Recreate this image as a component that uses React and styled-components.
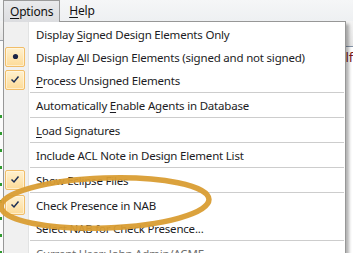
import React from 'react';
import styled, { createGlobalStyle } from 'styled-components';

const GlobalStyle = createGlobalStyle`
  html, body { margin: 0; padding: 0; background: #ffffff; }
  body { width: 353px; height: 253px; overflow: hidden; }
`;

const FONT = `"Noto Sans", "Segoe UI", "Liberation Sans", sans-serif`;

const Screen = styled.div`
  position: relative;
  width: 353px;
  height: 253px;
  overflow: hidden;
  background: #ffffff;
  font-family: ${FONT};
  font-size: 11.5px;
  letter-spacing: -0.2px;
  color: #1c1c24;
`;

const MenuBar = styled.div`
  position: relative;
  z-index: 3;
  display: flex;
  gap: 2px;
  height: 21px;
  padding-left: 3px;
  background: linear-gradient(#f5f6f7, #eef0f2);
`;

const MenuTitle = styled.div`
  display: flex;
  align-items: center;
  box-sizing: border-box;
  height: ${(p) => (p.$open ? '22px' : '21px')};
  padding: 0 6px 1px;
  border: 1px solid ${(p) => (p.$open ? '#9a9a9a' : 'transparent')};
  border-bottom: none;
  background: ${(p) => (p.$open ? 'linear-gradient(#e9eaec, #dcdde0)' : 'transparent')};
  color: #111;
  font-size: 12px;
`;

const Key = styled.span`
  text-decoration: underline;
  text-underline-offset: 2px;
  text-decoration-thickness: 1px;
`;

const Workspace = styled.div`
  display: flex;
  height: 232px;
`;

const TreePane = styled.div`
  width: 140px;
  display: flex;
  flex-direction: column;
  border-right: 1px solid #a0a0a0;
`;

const PaneHeader = styled.div`
  height: ${(p) => p.$h}px;
  flex: none;
  background: linear-gradient(#f3f3f3, #e6e6e6);
  border-bottom: 1px solid ${(p) => p.$line};
`;

const TreeBody = styled.div`
  flex: 1;
  background:
    repeating-linear-gradient(180deg, transparent 0 14px, #2f9a2f 14px 17px) 0 60px / 2px 100% no-repeat,
    #fbfbfb;
`;

const DocPane = styled.div`
  flex: 1;
  display: flex;
  flex-direction: column;
`;

const DocRow = styled.div`
  display: flex;
  justify-content: flex-end;
  height: 20px;
  align-items: center;
  font-size: 13px;
  color: #7a1616;
`;

const Menu = styled.div`
  position: absolute;
  z-index: 2;
  top: 21px;
  left: 3px;
  width: 343px;
  box-sizing: border-box;
  border: 1px solid #979797;
  background: linear-gradient(to right, #f0f0f0 0 24px, #e2e3e3 24px 25px, #ffffff 25px);
  box-shadow: 3px 3px 3px rgba(0, 0, 0, 0.3);
`;

const Item = styled.div`
  display: flex;
  align-items: center;
  height: 23px;
  color: ${(p) => (p.$disabled ? '#6d6d6d' : '#1c1c24')};
`;

const Gutter = styled.div`
  width: 24px;
  height: 23px;
  flex: none;
  display: flex;
  align-items: center;
  justify-content: flex-start;
  padding-left: 1px;
  box-sizing: border-box;
`;

const MarkBox = styled.div`
  width: 20px;
  height: 20px;
  box-sizing: border-box;
  border: 1px solid #f1bd68;
  border-radius: 2px;
  background: linear-gradient(#fff1cf, #fddb98);
  box-shadow: inset 0 0 0 1px rgba(255, 250, 235, 0.6);
  display: flex;
  align-items: center;
  justify-content: center;
`;

const Label = styled.span`
  padding-left: 8px;
  padding-top: 2px;
  white-space: nowrap;
`;

const Separator = styled.div`
  height: 1px;
  margin: 1px 1px 0 26px;
  background: #cdcdcd;
`;

const Overlay = styled.svg`
  position: absolute;
  z-index: 4;
  left: 0;
  top: 0;
  pointer-events: none;
`;

const Check = () => (
  <svg width="10" height="9" viewBox="0 0 10 9">
    <path d="M1.5 4.5 L4 7 L8.5 1.5" fill="none" stroke="#1d2f55" strokeWidth="1.5" />
  </svg>
);

const Bullet = () => (
  <svg width="7" height="7" viewBox="0 0 7 7">
    <circle cx="3.5" cy="3.5" r="2.6" fill="#1b2446" />
  </svg>
);

const MenuRow = ({ mark, disabled, children }) => (
  <Item $disabled={disabled}>
    <Gutter>
      {mark && <MarkBox>{mark === 'check' ? <Check /> : <Bullet />}</MarkBox>}
    </Gutter>
    <Label>{children}</Label>
  </Item>
);

export default function App() {
  return (
    <Screen>
      <GlobalStyle />
      <MenuBar>
        <MenuTitle $open>
          <span><Key>O</Key>ptions</span>
        </MenuTitle>
        <MenuTitle>
          <span><Key>H</Key>elp</span>
        </MenuTitle>
      </MenuBar>

      <Workspace>
        <TreePane>
          <PaneHeader $h={19} $line="#9aa0a8" />
          <TreeBody />
        </TreePane>
        <DocPane>
          <PaneHeader $h={25} $line="#8494a8" />
          <DocRow>Self</DocRow>
        </DocPane>
      </Workspace>

      <Menu>
        <MenuRow>Display <Key>S</Key>igned Design Elements Only</MenuRow>
        <MenuRow mark="bullet">Display <Key>A</Key>ll Design Elements (signed and not signed)</MenuRow>
        <MenuRow mark="check"><Key>P</Key>rocess Unsigned Elements</MenuRow>
        <Separator />
        <MenuRow>Automatically <Key>E</Key>nable Agents in Database</MenuRow>
        <Separator />
        <MenuRow><Key>L</Key>oad Signatures</MenuRow>
        <Separator />
        <MenuRow>Include ACL Note in Design Element List</MenuRow>
        <Separator />
        <MenuRow mark="check">Show Eclipse Files</MenuRow>
        <Separator />
        <MenuRow mark="check">Check Presence in NAB</MenuRow>
        <MenuRow>Select NAB for Check Presence...</MenuRow>
        <Separator />
        <MenuRow disabled>Current User: John Admin/ACME</MenuRow>
      </Menu>

      <Overlay width="353" height="253" viewBox="0 0 353 253">
        <ellipse
          cx="105"
          cy="203"
          rx="104"
          ry="25"
          transform="rotate(-2 105 203)"
          fill="none"
          stroke="#d99d33"
          strokeWidth="5.5"
          opacity="0.95"
        />
      </Overlay>
    </Screen>
  );
}
